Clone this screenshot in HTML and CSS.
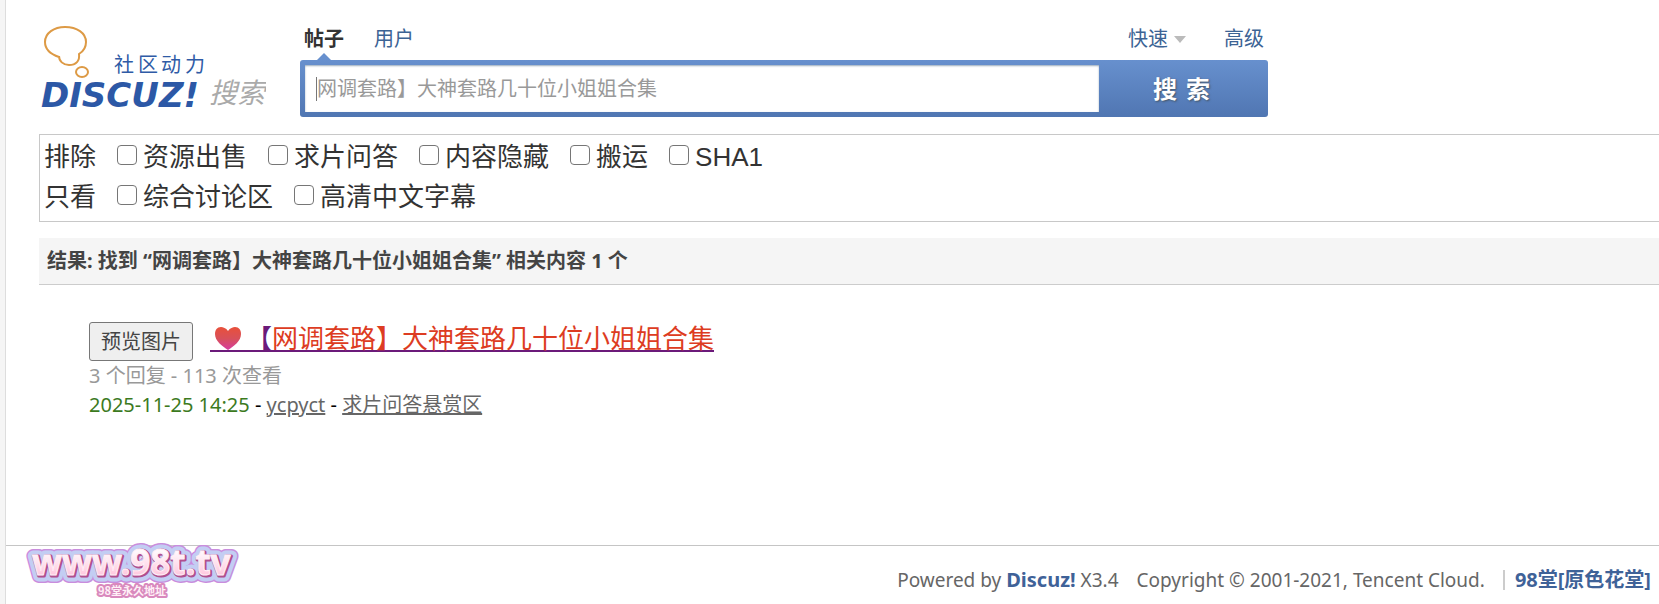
FILE: index.html
```html
<!DOCTYPE html>
<html lang="zh-CN">
<head>
<meta charset="utf-8">
<title>搜索</title>
<link rel="stylesheet" href="styles.css">
</head>
<body>
<div class="page">
  <main class="main">
    <header class="header">
      <a class="logo" href="#" aria-label="Discuz! 搜索">
        <svg width="227" height="96" viewBox="0 0 227 96">
          <path d="M20 32C11 29 6 24 6 17C6 8 15 2 26 2C38 2 47 8 47 17C47 22 45 26 40 29C41 36 37 40 30 40C24 40 20 36 20 31" class="bubble"/>
          <ellipse cx="43" cy="47" rx="6" ry="5" class="bubble"/>
          <g class="slogan"><text x="75" y="47">社</text><text x="99" y="47">区</text><text x="122" y="47">动</text><text x="146" y="47">力</text></g>
          <text x="2" y="82" class="brand">DISCUZ!</text>
          <text x="170" y="78" class="brand-sub">搜索</text>
        </svg>
      </a>
      <form class="search">
        <nav class="tabs">
          <a class="tab tab-on" href="#">帖子</a>
          <a class="tab" href="#">用户</a>
          <span class="tools">
            <a class="tab quick" href="#">快速</a>
            <a class="tab" href="#">高级</a>
          </span>
        </nav>
        <div class="bar">
          <div class="field"><span class="caret"></span><input class="query" type="text" aria-label="搜索内容" value="网调套路】大神套路几十位小姐姐合集"></div>
          <button class="submit" type="button"><span>搜</span><span>索</span></button>
        </div>
      </form>
    </header>

    <section class="filters">
      <div class="filter-row">
        <span class="filter-name">排除</span>
        <label class="option"><input type="checkbox">资源出售</label>
        <label class="option"><input type="checkbox">求片问答</label>
        <label class="option"><input type="checkbox">内容隐藏</label>
        <label class="option"><input type="checkbox">搬运</label>
        <label class="option"><input type="checkbox">SHA1</label>
      </div>
      <div class="filter-row">
        <span class="filter-name">只看</span>
        <label class="option"><input type="checkbox">综合讨论区</label>
        <label class="option"><input type="checkbox">高清中文字幕</label>
      </div>
    </section>

    <h2 class="summary">结果: 找到 “网调套路】大神套路几十位小姐姐合集” 相关内容 1 个</h2>

    <article class="result">
      <div class="result-head">
        <button class="preview" type="button">预览图片</button>
        <a class="title" href="#"><svg class="heart" width="28" height="24" viewBox="0 0 28 24"><defs><linearGradient id="heart" x1="0" y1="0" x2="0" y2="1"><stop offset="0" stop-color="#e8503a"/><stop offset=".5" stop-color="#d8505a"/><stop offset="1" stop-color="#d63ca0"/></linearGradient></defs><path fill="url(#heart)" d="M14 4C16 1 19 0 21 0C25 0 27 3 27 7C27 14 20 19 14 23C8 19 1 14 1 7C1 3 3 0 7 0C9 0 12 1 14 4Z"/></svg>【<em>网调套路】大神套路几十位小姐姐合集</em></a>
      </div>
      <p class="stats">3 个回复 - 113 次查看</p>
      <p class="meta"><time>2025-11-25 14:25</time> - <a href="#">ycpyct</a> - <a href="#">求片问答悬赏区</a></p>
    </article>
  </main>

  <footer class="footer">
    <a class="badge" href="#" aria-label="www.98t.tv">
      <svg width="218" height="64" viewBox="0 0 218 64">
        <defs>
          <linearGradient id="pink" x1="0" y1="0" x2="0" y2="1"><stop offset=".3" stop-color="#fff8fc"/><stop offset="1" stop-color="#ffb4d2"/></linearGradient>
          <text id="site" class="site" x="9" y="38">www.98t.tv</text>
          <text id="note" class="site-note" x="74" y="57">98堂永久地址</text>
        </defs>
        <use href="#site" stroke="#c98ddd" stroke-width="14"/>
        <use href="#site" stroke="#c3cdf3" stroke-width="11"/>
        <use href="#site" stroke="#b0508f" stroke-width="3"/>
        <use href="#site" x="-1" y="-1" fill="url(#pink)" stroke="#fff0f7" stroke-width="1"/>
        <use href="#note" stroke="#d989bd" stroke-width="4"/>
        <use href="#note" fill="#fff0f7"/>
      </svg>
    </a>
    <p class="legal"><span>Powered by <a href="#">Discuz!</a> X3.4</span><span>Copyright © 2001-2021, Tencent Cloud.</span><a class="site-link" href="#">98堂[原色花堂]</a></p>
  </footer>
</div>
</body>
</html>
```
FILE: styles.css
```css
* { box-sizing: border-box; }
body {
  margin: 0;
  background: #f5f5f5;
  color: #333;
  font: 20px/28px "Noto Sans", "Noto Sans CJK SC", sans-serif;
}
a { color: #369; text-decoration: none; }
p, h2 { margin: 0; }
button, input { font: inherit; }
.page {
  display: flex;
  flex-direction: column;
  min-height: 100vh;
  margin-left: 5px;
  border-left: 1px solid #ddd;
  background: #fff;
}
.main { flex: 1; padding: 25px 0 0 33px; }

.header { display: flex; gap: 34px; height: 109px; }
.logo { width: 227px; }
.logo svg { display: block; }
.bubble { fill: none; stroke: #dd9a45; stroke-width: 2; }
.slogan { font: 20px "Noto Sans CJK SC", sans-serif; fill: #2f5ba6; }
.brand { font: italic bold 34px "DejaVu Sans", sans-serif; fill: #2c58a6; }
.brand-sub { font: italic 28px "Noto Sans CJK SC", sans-serif; fill: #aaa; }

.search { width: 968px; max-width: 100%; }
.tabs { display: flex; gap: 30px; height: 35px; padding: 0 4px; }
.tab { position: relative; color: #3c6394; }
.tab-on { color: #333; font-weight: bold; }
.tab-on::after {
  content: "";
  position: absolute;
  left: 13px;
  bottom: 0;
  border: 7px solid transparent;
  border-top: 0;
  border-bottom-color: #6790ce;
}
.tools { display: flex; gap: 38px; margin-left: auto; }
.quick { display: flex; align-items: center; gap: 6px; height: 28px; }
.quick::after {
  content: "";
  border: 6px solid transparent;
  border-bottom: 0;
  border-top: 7px solid #bbb;
}
.bar {
  display: flex;
  height: 57px;
  padding: 5px 0 5px 5px;
  border-radius: 3px;
  background: linear-gradient(#6790ce, #5076b2);
}
.field {
  display: flex;
  flex: 1;
  align-items: center;
  padding-left: 11px;
  background: #fff;
  box-shadow: inset 0 1px 2px #9ab;
}
.caret { width: 1px; height: 24px; background: #777; }
.query { flex: 1; padding: 0; border: 0; outline: 0; background: none; color: #999; }
.submit {
  display: flex;
  align-items: center;
  justify-content: center;
  gap: 9px;
  width: 169px;
  padding: 0 4px 0 0;
  border: 0;
  background: none;
  color: #fff;
  font-size: 24px;
  font-weight: bold;
  text-shadow: 1px 1px 2px #456;
}

.filters {
  height: 88px;
  padding: 2px 4px;
  border: 1px solid #c8c8c8;
  border-right: 0;
  font: 26px/40px "Liberation Sans", "Noto Sans CJK SC", sans-serif;
}
.filter-row { display: flex; gap: 21px; }
.option { display: flex; align-items: center; gap: 6px; }
.option input {
  appearance: none;
  width: 20px;
  height: 20px;
  margin: 0 0 4px;
  border: 1px solid #767676;
  border-radius: 4px;
  background: #fff;
}
.option input:checked { background: #369; }

.summary {
  height: 47px;
  margin-top: 16px;
  padding-left: 8px;
  border-bottom: 1px solid #ccc;
  background: #f5f5f5;
  color: #444;
  font-size: 20px;
  line-height: 46px;
}

.result { padding: 37px 0 24px 50px; }
.result-head { display: flex; align-items: flex-start; gap: 17px; }
.preview {
  height: 39px;
  padding: 0 11px;
  border: 1px solid #777;
  border-radius: 3px;
  background: #efefef;
  color: #444;
}
.title {
  margin-top: 2px;
  background: linear-gradient(#6b1a7a, #6b1a7a) bottom / 100% 2px no-repeat;
  color: #6b1a7a;
  font-size: 26px;
}
.title em { color: #dd3c22; font-style: normal; }
.heart { margin: 0 4px; vertical-align: -3px; }
.stats { color: #999; line-height: 30px; }
.meta a { color: #666; text-decoration: underline; }
.meta { color: #000; }
.meta time { color: #3c7a1e; }

.footer {
  position: relative;
  height: 59px;
  padding: 20px 8px 0;
  border-top: 1px solid #c5c5c5;
  color: #666;
}
.badge { position: absolute; left: 18px; top: -8px; }
.badge svg { display: block; }
.site { font: bold 35px "Noto Sans", sans-serif; stroke-linejoin: round; }
.site-note { font: bold 11px "Noto Sans CJK SC", sans-serif; stroke-linejoin: round; }
.legal { display: flex; justify-content: flex-end; gap: 18px; font-size: 19px; }
.legal a { color: #3f6298; font-weight: bold; font-size: 20px; }
.site-link { position: relative; padding-left: 12px; }
.site-link::before {
  content: "";
  position: absolute;
  left: 0;
  top: 4px;
  width: 2px;
  height: 20px;
  background: #ccc;
}
```
